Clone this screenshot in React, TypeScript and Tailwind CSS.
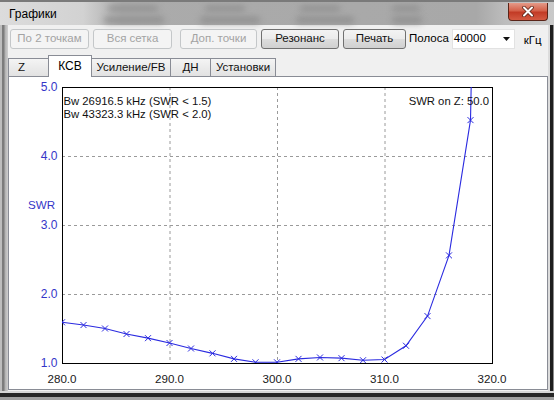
import React from "react";

const data: [number, number][] = [
  [280, 1.59], [282, 1.55], [284, 1.5], [286, 1.42], [288, 1.36], [290, 1.29],
  [292, 1.21], [294, 1.14], [296, 1.06], [298, 1.01], [300, 1.01], [302, 1.06],
  [304, 1.08], [306, 1.07], [308, 1.04], [310, 1.05], [312, 1.25], [314, 1.68],
  [316, 2.56], [318, 4.52], [320, 20],
];
const X = (f: number) => 62 + (f - 280) * 10.75;
const Y = (s: number) => 363 - (s - 1) * 69;

function Chart() {
  const blue = "#2a2ae0";
  const label = "#3535c8";
  const pts = data.map(([f, s]) => `${X(f)},${Y(s)}`).join(" ");
  return (
    <svg width={538} height={312} viewBox="9 77 538 312" className="block">
      <defs>
        <clipPath id="plot">
          <rect x={62} y={87} width={430} height={276} />
        </clipPath>
      </defs>
      {[290, 300, 310].map((f) => (
        <line key={f} x1={X(f) + 0.5} y1={87} x2={X(f) + 0.5} y2={363} stroke="#9a9a9a" strokeDasharray="3 3" />
      ))}
      {[2, 3, 4].map((s) => (
        <line key={s} x1={62} y1={Y(s) + 0.5} x2={492} y2={Y(s) + 0.5} stroke="#9a9a9a" strokeDasharray="3 3" />
      ))}
      <rect x={62.5} y={87.5} width={430} height={276} fill="none" stroke="#000" strokeWidth={1} />
      <g clipPath="url(#plot)">
        <polyline points={pts} fill="none" stroke={blue} strokeWidth={1.1} />
        {data.slice(0, 20).map(([f, s]) => {
          const x = X(f);
          const y = Y(s);
          return (
            <path key={f} d={`M${x - 3} ${y - 3}L${x + 3} ${y + 3}M${x - 3} ${y + 3}L${x + 3} ${y - 3}`} stroke={blue} strokeWidth={1} />
          );
        })}
      </g>
      <g fontFamily="'Liberation Sans', Arial, sans-serif" fontSize={11.3}>
        {[1, 2, 3, 4, 5].map((s) => (
          <text key={s} x={57.5} y={Y(s)} textAnchor="end" dominantBaseline="central" fill={label} fontSize={12}>
            {s.toFixed(1)}
          </text>
        ))}
        <text x={28} y={204} dominantBaseline="central" fill={label} fontSize={11.6}>SWR</text>
        {[280, 290, 300, 310, 320].map((f) => (
          <text key={f} x={X(f)} y={378.5} textAnchor="middle" dominantBaseline="central" fill="#1a1a1a" fontSize={11.6}>
            {f.toFixed(1)}
          </text>
        ))}
        <text x={63.5} y={101} dominantBaseline="central" fill="#111">Bw 26916.5 kHz (SWR &lt; 1.5)</text>
        <text x={63.5} y={114} dominantBaseline="central" fill="#111">Bw 43323.3 kHz (SWR &lt; 2.0)</text>
        <text x={489} y={101} textAnchor="end" dominantBaseline="central" fill="#111">SWR on Z: 50.0</text>
      </g>
    </svg>
  );
}

function Btn({ children, w, ml, disabled }: { children: React.ReactNode; w: string; ml: string; disabled?: boolean }) {
  return (
    <div
      className={`${w} ${ml} h-[20px] flex items-center justify-center rounded-[3px] border text-[11.5px] leading-none ${
        disabled
          ? "border-[#c4c7c9] bg-[#f4f4f4] text-[#a3a3a3]"
          : "border-[#707070] bg-[linear-gradient(to_bottom,#f3f3f3_0%,#ebebeb_50%,#dddddd_51%,#d0d0d0_100%)] text-[#111]"
      }`}
    >
      {children}
    </div>
  );
}

function Tab({ children, w, selected, left }: { children: React.ReactNode; w: string; selected?: boolean; left?: boolean }) {
  return (
    <div
      className={`${w} -ml-px first:ml-0 flex ${left ? "justify-start pl-[9px]" : "justify-center"} text-[11.5px] leading-none border-l border-r border-t border-[#898c95] ${
        selected
          ? "relative z-10 h-[22px] bg-white -mb-px pt-[4px] text-[12px]"
          : "h-[18px] items-center bg-[linear-gradient(to_bottom,#f4f4f4,#e2e2e2)] text-[#111]"
      }`}
    >
      {children}
    </div>
  );
}

const blobs: [number, number, number, number][] = [
  [108, 4, 50, 5], [104, 15, 60, 6], [205, 4, 40, 5], [200, 15, 60, 6],
  [300, 4, 40, 5], [296, 15, 58, 6], [392, 4, 28, 5], [392, 15, 30, 6],
];

export default function App() {
  return (
    <div
      className="w-[554px] h-[400px] overflow-hidden flex flex-col bg-[#c4c4c4] text-black"
      style={{ fontFamily: "'Liberation Sans', Arial, sans-serif" }}
    >
      {/* Title bar */}
      <div className="relative h-[25px] flex items-start bg-[linear-gradient(to_right,#dcdcdc_0%,#d2d2d2_15%,#ababab_22%,#a8a8a8_86%,#bcbcbc_91%,#c9c9c9_100%)] border-t-[2px] border-[#7a7a7a]">
        {blobs.map(([l, t, w, h], i) => (
          <div
            key={i}
            className="absolute rounded-full bg-[#8e8e8e] blur-[3px]"
            style={{ left: l, top: t, width: w, height: h }}
          />
        ))}
        <div className="relative pl-[9px] pt-[6px] text-[12px] leading-none text-black">Графики</div>
        <div className="relative ml-auto mr-[6px] mt-[1px] w-[40px] h-[18px] rounded-b-[4px] border border-t-0 border-[#5a2418] bg-[linear-gradient(to_bottom,#e49a88_0%,#d4614a_45%,#c23b26_55%,#d45a42_100%)] flex items-center justify-center">
          <svg width="12" height="11" viewBox="0 0 12 11">
            <path d="M2 1.5L10 9.5M10 1.5L2 9.5" stroke="#5a2418" strokeWidth="3.6" strokeLinecap="round" />
            <path d="M2 1.5L10 9.5M10 1.5L2 9.5" stroke="#ffffff" strokeWidth="2" strokeLinecap="round" />
          </svg>
        </div>
      </div>

      {/* Body */}
      <div className="flex h-[366px]">
        <div className="w-[8px] bg-[linear-gradient(to_right,#bdbdbd_0px,#bdbdbd_2px,#7c7c7c_2px,#7c7c7c_4px,#b0b0b0_5px,#cfcfcf_8px)]" />
        <div className="w-[540px] bg-[#f0f0f0] flex flex-col">
          {/* toolbar */}
          <div className="mt-[4px] h-[20px] flex items-center">
            <Btn w="w-[79px]" ml="ml-[2px]" disabled>По 2 точкам</Btn>
            <Btn w="w-[79px]" ml="ml-[4px]" disabled>Вся сетка</Btn>
            <Btn w="w-[77px]" ml="ml-[8px]" disabled>Доп. точки</Btn>
            <Btn w="w-[78px]" ml="ml-[4px]">Резонанс</Btn>
            <Btn w="w-[63px]" ml="ml-[4px]">Печать</Btn>
            <div className="ml-[3px] text-[11.5px] leading-none">Полоса</div>
            <div className="ml-[3px] w-[63px] h-[20px] bg-white border border-[#e2e2e2] flex items-center pl-[1px] text-[11.5px] leading-none">
              <span>40000</span>
              <svg className="ml-auto mr-[4px]" width="7" height="4" viewBox="0 0 7 4">
                <path d="M0 0H7L3.5 4Z" fill="#111" />
              </svg>
            </div>
            <div className="ml-[9px] mt-[4px] text-[11.5px] leading-none">кГц</div>
          </div>
          {/* tabs */}
          <div className="mt-[6px] h-[21px] flex items-end">
            <Tab w="w-[41px]" left>Z</Tab>
            <Tab w="w-[44px]" selected>КСВ</Tab>
            <Tab w="w-[80px]">Усиление/FB</Tab>
            <Tab w="w-[41px]">ДН</Tab>
            <Tab w="w-[66px]">Установки</Tab>
          </div>
          <div className="h-[314px] border border-[#898c95] bg-white">
            <Chart />
          </div>
        </div>
        <div className="w-[6px] bg-[linear-gradient(to_right,#dcdcdc_0px,#dcdcdc_2px,#1e1e1e_2px,#1e1e1e_5px,#8c8c8c_5px)]" />
      </div>
      <div className="flex-1 bg-[linear-gradient(to_bottom,#d6d6d6_0px,#d6d6d6_2px,#262626_2px,#262626_6px,#a0a0a0_6px)]" />
    </div>
  );
}
